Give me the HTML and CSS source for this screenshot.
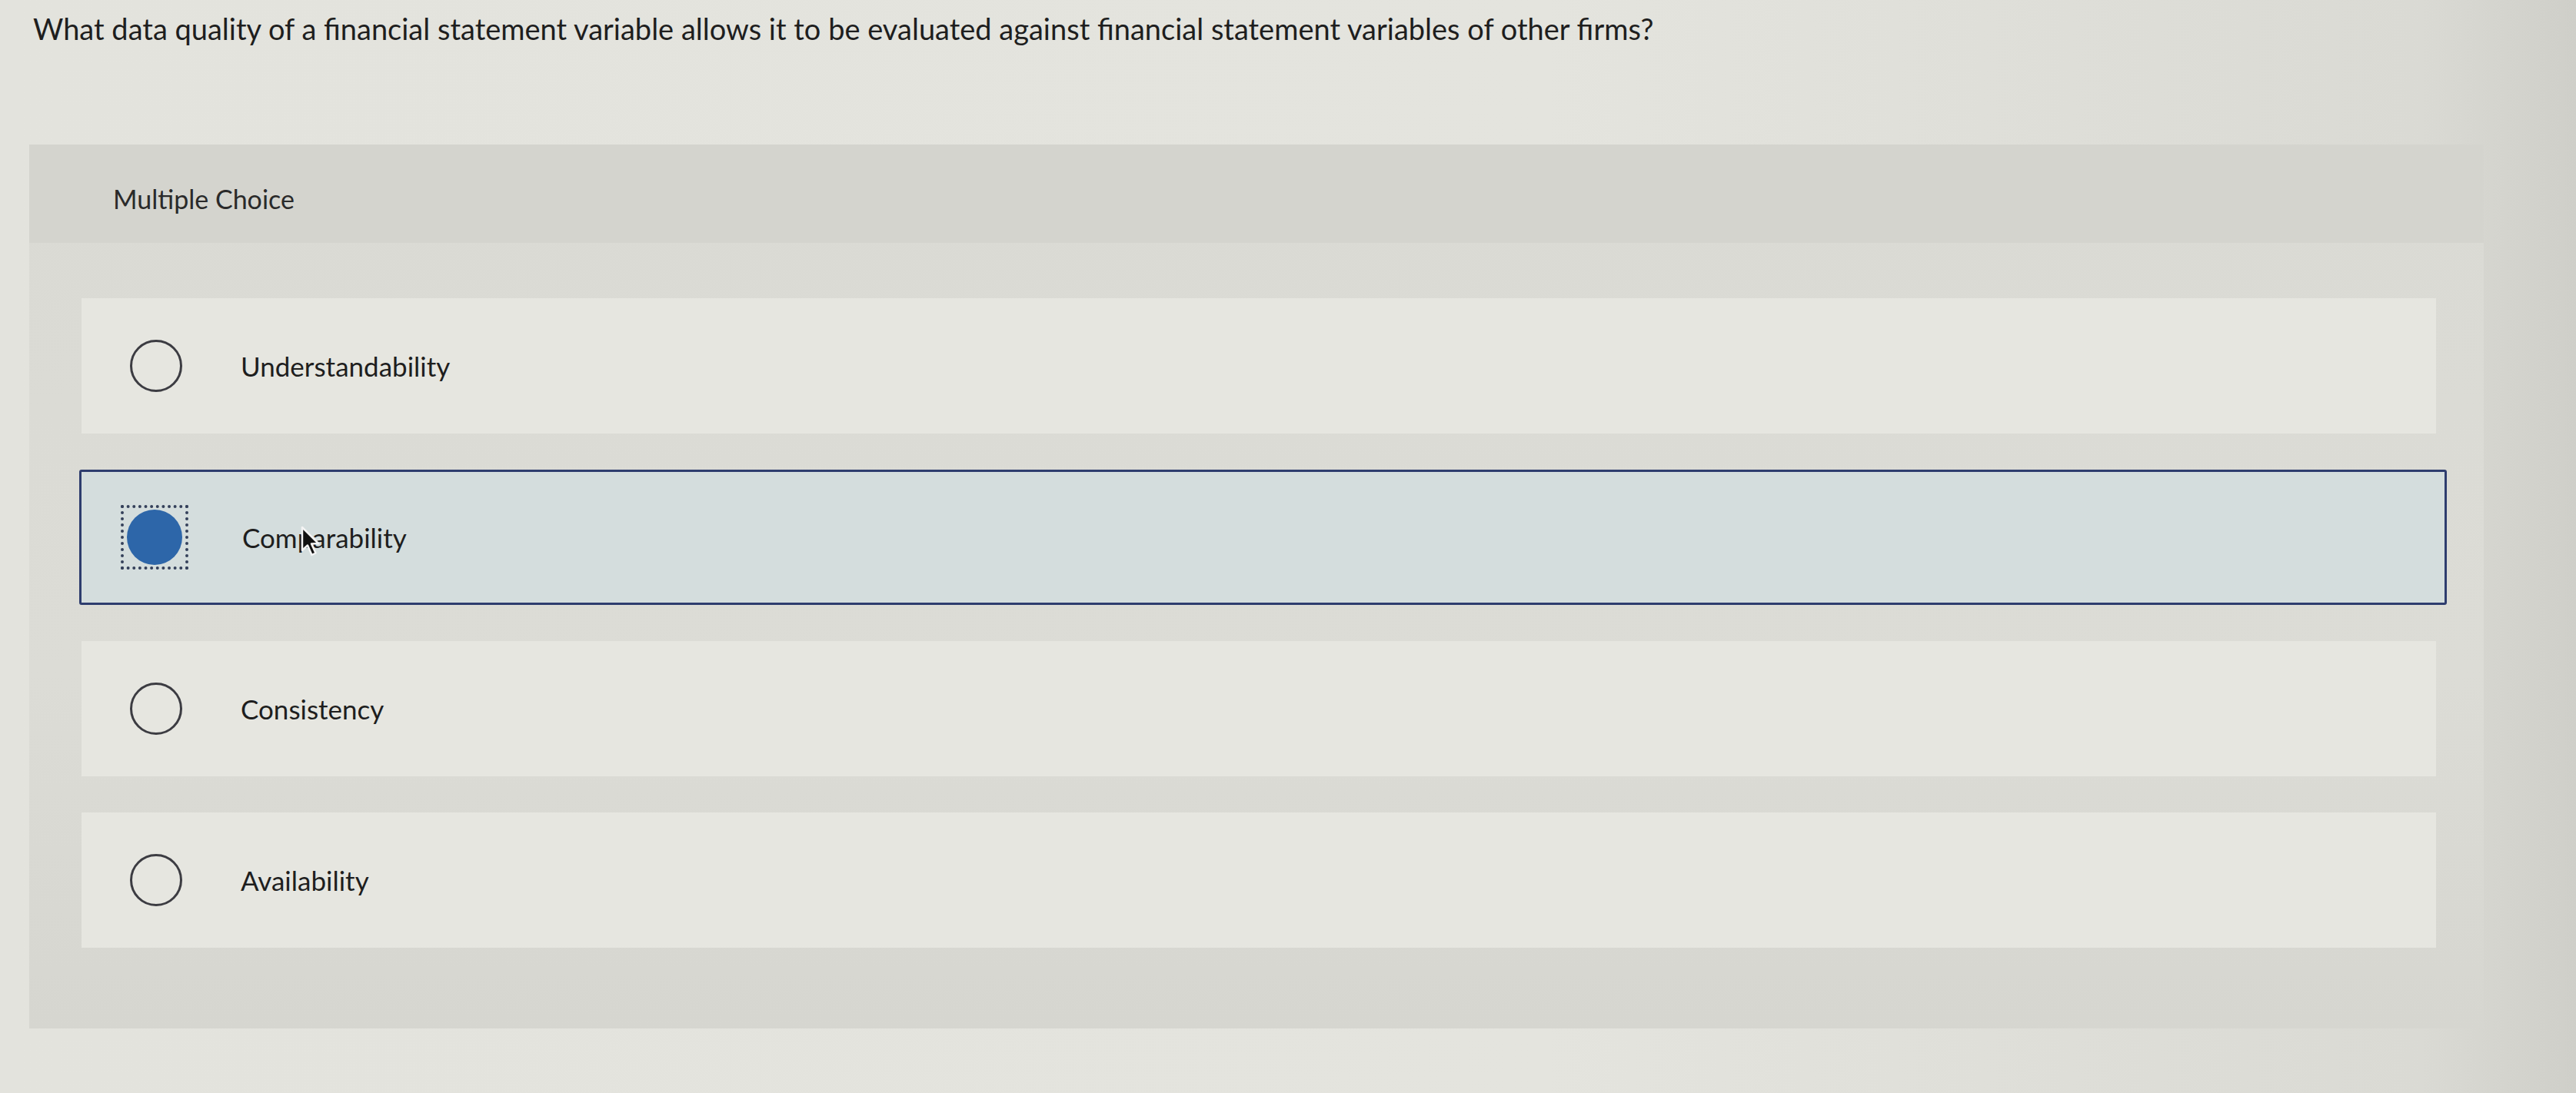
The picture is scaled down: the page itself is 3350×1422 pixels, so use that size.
FILE: index.html
```html
<!DOCTYPE html>
<html lang="en">
<head>
<meta charset="UTF-8">
<meta name="viewport" content="width=device-width, initial-scale=1.0">
<title>Multiple Choice</title>
<link rel="stylesheet" href="styles.css">
</head>
<body>

<div id="page">
    <p class="question">What data quality of a financial statement variable allows it to be evaluated against financial statement variables of other firms?</p>

    <div class="question-panel">
        <div class="panel-header">Multiple Choice</div>

        <ul class="choices">
            <li class="choice">
                <span class="radio"></span>
                <span class="choice-label">Understandability</span>
            </li>
            <li class="choice choice-selected">
                <span class="radio-focus"><span class="radio radio-checked"></span></span>
                <span class="choice-label">Comparability
                    <svg class="cursor" width="26" height="42" viewBox="0 0 26 42">
                        <path d="M2 2 L2 32 L9 25.5 L14.5 38 L19.5 35.5 L14 23.5 L23 23 Z" fill="#111" stroke="#f4f4f4" stroke-width="2.5" stroke-linejoin="round"/>
                    </svg>
                </span>
            </li>
            <li class="choice">
                <span class="radio"></span>
                <span class="choice-label">Consistency</span>
            </li>
            <li class="choice">
                <span class="radio"></span>
                <span class="choice-label">Availability</span>
            </li>
        </ul>
    </div>
</div>

</body>
</html>
```

FILE: styles.css
```css
html {
    box-sizing: border-box;
  }

  *, *:before, *:after {
    box-sizing: inherit;
  }

  body {
    margin: 0;
    height: 1422px;
    overflow: hidden;
    background: linear-gradient(to right, #e3e3dd 0%, #e4e4de 60%, #dadad4 94%, #cfcfc9 100%);
    font-family: 'Lato', 'Liberation Sans', sans-serif;
    color: #222;
  }

  #page {
    padding-top: 12px;
  }

  .question {
    margin: 0;
    padding-left: 43px;
    font-size: 38px;
    line-height: 50px;
    color: #1e1e1e;
  }

  .question-panel {
    margin: 126px 0 0 38px;
    width: 3192px;
    height: 1150px;
    background: linear-gradient(to bottom, #dadad4 0%, #dcdcd6 60%, #d6d6d0 100%);
  }

  .panel-header {
    height: 128px;
    padding: 12px 0 0 109px;
    display: flex;
    align-items: center;
    font-size: 34px;
    color: #2a2a2a;
    background: #d4d4ce;
  }

  .choices {
    list-style: none;
    margin: 0;
    padding: 72px 62px 0 68px;
    display: flex;
    flex-direction: column;
    gap: 47px;
  }

  .choice {
    height: 176px;
    display: flex;
    align-items: center;
    background: #e6e6e0;
    position: relative;
  }

  .choice .radio {
    width: 68px;
    height: 68px;
    margin-left: 63px;
    border: 3px solid #3c3c42;
    border-radius: 50%;
    flex: none;
  }

  .choice-label {
    margin-left: 76px;
    font-size: 35px;
    color: #1e1e1e;
    position: relative;
  }

  .choice-selected {
    margin: 0 -14px 0 -3px;
    background: #d4dddd;
    border: 3px solid #2e3d6e;
    border-radius: 3px;
  }

  .radio-focus {
    width: 88px;
    height: 84px;
    margin-left: 51px;
    border: 4px dotted #34405a;
    display: flex;
    align-items: center;
    justify-content: center;
    flex: none;
  }

  .radio-focus .radio-checked {
    width: 72px;
    height: 72px;
    margin: 0;
    border: none;
    background: #2d66a9;
  }

  .choice-selected .choice-label {
    margin-left: 70px;
  }

  .cursor {
    position: absolute;
    left: 76px;
    top: 6px;
  }
```
